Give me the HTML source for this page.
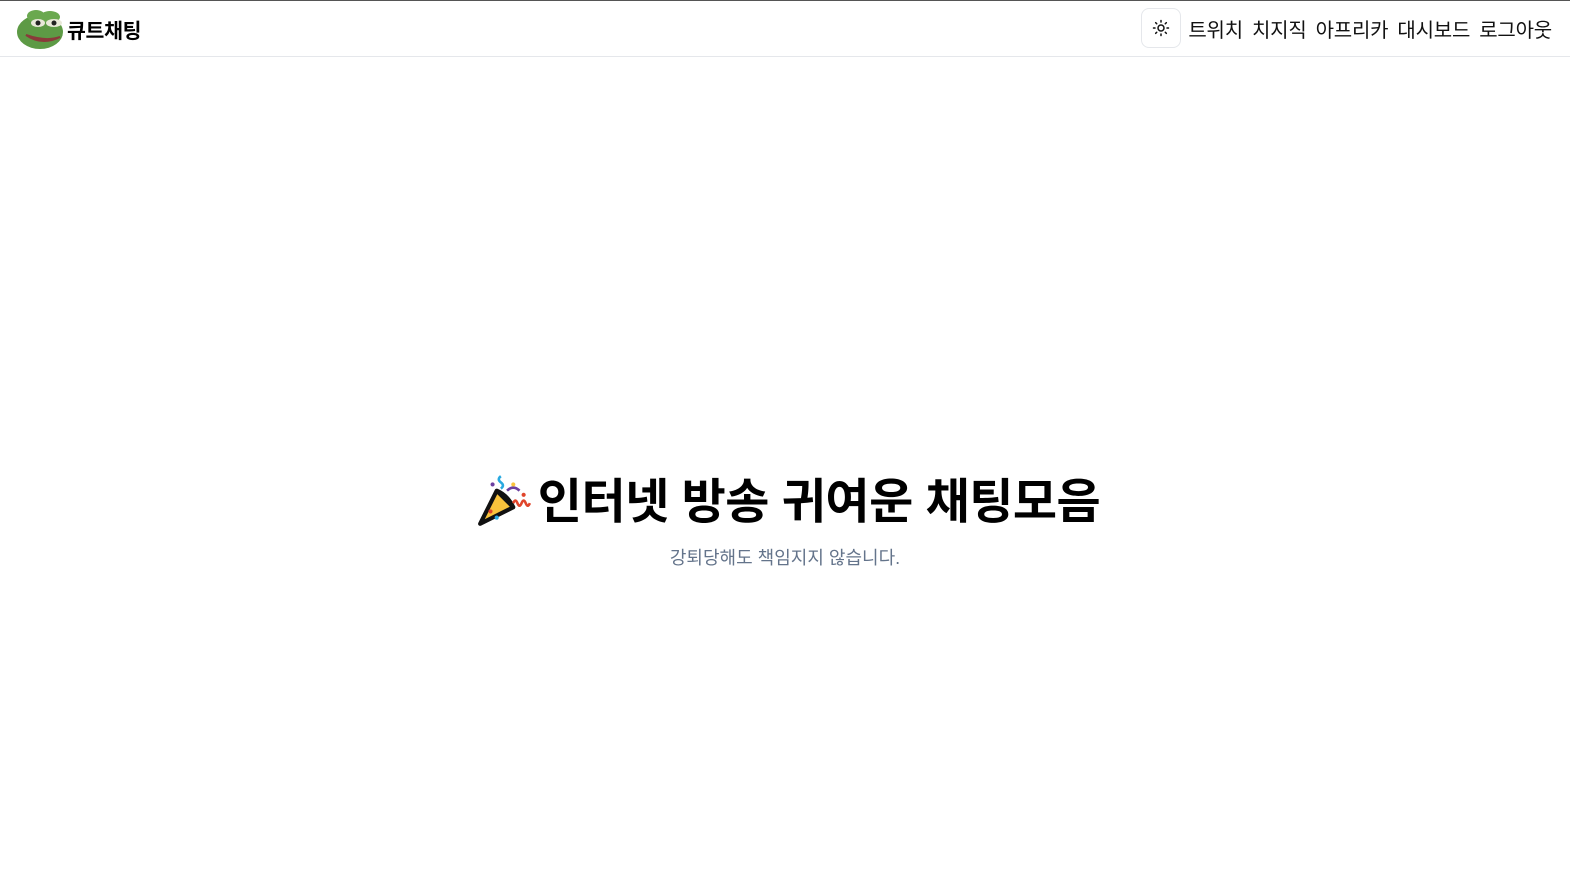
<!DOCTYPE html>
<html><head><meta charset="utf-8"><style>
*{margin:0;padding:0;box-sizing:border-box}
body{width:1570px;height:884px;background:#fff;font-family:"Liberation Sans","Noto Sans CJK KR",sans-serif;color:#000;border-top:1px solid #555;position:relative;overflow:hidden}
header{height:56px;border-bottom:1px solid #e5e7eb;position:relative}
.logo{position:absolute;left:16px;top:7px;display:flex;align-items:center}
.logo span{font-weight:700;font-size:20.5px;margin-left:1px;letter-spacing:-0.3px}
nav{position:absolute;right:18px;top:7px;display:flex;align-items:center}
.btn{width:40px;height:40px;border:1px solid #e5e7eb;border-radius:8px;display:flex;align-items:center;justify-content:center;margin-right:7px}
nav a{font-size:20px;color:#111;margin-left:9px;text-decoration:none;letter-spacing:-0.2px}
nav a:first-of-type{margin-left:0}
h1{position:absolute;left:6px;right:0;top:471px;text-align:center;font-size:48px;font-weight:700;letter-spacing:-0.5px;line-height:60px}
h1 svg{vertical-align:-10px;margin-right:4px}
p{position:absolute;left:0;right:0;top:544px;text-align:center;font-size:18px;color:#64748b;line-height:26px;padding-left:0}
</style></head><body>
<header>
<div class="logo">
<svg width="50" height="42" viewBox="0 0 50 42">
<ellipse cx="24" cy="24" rx="23" ry="17" fill="#5d9a45"/>
<ellipse cx="20" cy="8" rx="9" ry="6" fill="#6aa84f"/>
<ellipse cx="34" cy="9" rx="10" ry="6" fill="#6aa84f"/>
<ellipse cx="22" cy="15" rx="7" ry="4" fill="#e8e8d8"/>
<ellipse cx="38" cy="15" rx="8" ry="4" fill="#e8e8d8"/>
<circle cx="22" cy="15" r="2.5" fill="#222"/><circle cx="38" cy="15" r="2.5" fill="#222"/>
<path d="M10 27 Q26 38 44 29 Q30 34 10 27Z" fill="#b55050" stroke="#8a3a3a" stroke-width="2"/>
</svg>
<span>큐트채팅</span>
</div>
<nav>
<div class="btn"><svg width="18" height="18" viewBox="0 0 24 24" fill="none" stroke="#111" stroke-width="2" stroke-linecap="round"><circle cx="12" cy="12" r="4"/><path d="M12 2v2M12 20v2M4.9 4.9l1.4 1.4M17.7 17.7l1.4 1.4M2 12h2M20 12h2M6.3 17.7l-1.4 1.4M19.1 4.9l-1.4 1.4"/></svg></div>
<a>트위치</a><a>치지직</a><a>아프리카</a><a>대시보드</a><a>로그아웃</a>
</nav>
</header>
<h1><svg width="58" height="56" viewBox="0 0 56 54">
<path d="M4 50 L20 18 L36 34 Z" fill="#f9c33c" stroke="#111" stroke-width="4" stroke-linejoin="round"/>
<path d="M20 18 Q30 22 36 34" fill="none" stroke="#111" stroke-width="4"/>
<path d="M24 4 q-4 3 0 6 q4 3 0 6" fill="none" stroke="#29a9e0" stroke-width="2.5"/>
<path d="M36 30 q2-5 4 0 q2 5 4 0 q2-5 4 0 q2 5 4 0" fill="none" stroke="#e0452b" stroke-width="2.5"/>
<path d="M30 18 q6-6 12 0" fill="none" stroke="#6b3fa0" stroke-width="2.5"/>
<circle cx="14" cy="38" r="2" fill="#e0452b"/><circle cx="20" cy="44" r="2" fill="#29a9e0"/>
<circle cx="36" cy="12" r="2" fill="#f9c33c"/><circle cx="46" cy="22" r="2" fill="#e0452b"/><circle cx="16" cy="12" r="2" fill="#6b3fa0"/>
</svg>인터넷 방송 귀여운 채팅모음</h1>
<p>강퇴당해도 책임지지 않습니다.</p>
</body></html>
